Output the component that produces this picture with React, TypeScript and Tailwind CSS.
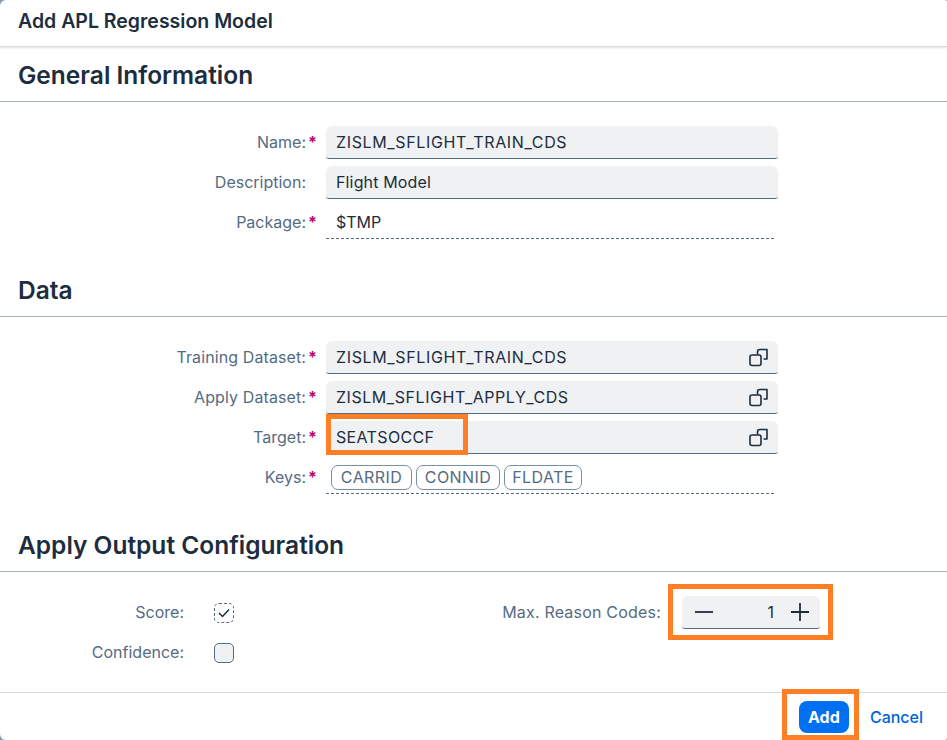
const labelColor = "text-[#556b82]";

function Label({ text, required, className }: { text: string; required?: boolean; className?: string }) {
  return (
    <div className={`flex items-center justify-end pb-[2px] pr-[10px] ${labelColor}`}>
      <span className={`mr-[-1px] ${className ?? ""}`}>{text}</span>
      <span className="w-[11px] pl-[3px] text-center font-bold text-[#c0006d]">{required ? "*" : ""}</span>
    </div>
  );
}

function ValueHelpIcon() {
  return (
    <svg width="20" height="19" viewBox="0 0 20 19" fill="none" stroke="#1d2d3e" strokeWidth="1.6">
      <rect x="1" y="7" width="11" height="10.5" rx="2" />
      <path d="M8.5 6.5V4a2.5 2.5 0 0 1 2.5-2.5h7v9.500h-3.500" strokeLinejoin="round" />
    </svg>
  );
}

function Input({ value, help, className }: { value: string; help?: boolean; className?: string }) {
  return (
    <div className="flex h-[33px] items-center justify-between rounded-t-[6px] rounded-b-[3px] border-b border-[#556b82] bg-[#eff1f2] pl-[10px] pr-[9px]">
      <span className={className}>{value}</span>
      {help && <ValueHelpIcon />}
    </div>
  );
}

function ReadOnly({ children }: { children: React.ReactNode }) {
  return (
    <div className="mr-[4px] flex h-[33px] items-center gap-[4px] border-b border-dashed border-[#556b82] pl-[10px]">
      {children}
    </div>
  );
}

function Token({ text, className }: { text: string; className: string }) {
  return (
    <span className={`flex h-[25px] items-center rounded-[7px] border border-[#788fa6] tracking-[0.4px] text-[#556b82] ${className}`}>
      {text}
    </span>
  );
}

function Section({ title, className }: { title: string; className: string }) {
  return (
    <h2 className={`flex items-end border-b border-[#a8b2bd] pb-[10px] pl-[18px] text-[24.5px] leading-[32px] font-semibold text-[#1d2d3e] ${className}`}>
      {title}
    </h2>
  );
}

function Highlight({ className }: { className: string }) {
  return <div className={`pointer-events-none absolute border-[5px] border-[#ff7f27] ${className}`} />;
}

export default function App() {
  return (
    <div className="h-[740px] w-[947px] bg-[#8b9bab]">
      <div className="relative h-[740px] w-[947px] overflow-hidden rounded-l-[6px] rounded-r-[2px] bg-white font-['Inter','Open_Sans',sans-serif] text-[16px] text-[#1d2d3e]">
        <header className="flex h-[47px] items-center border-b border-[#d9d9d9] pb-[3px] pl-[18px] text-[19.5px] font-semibold shadow-[0_1px_2px_rgba(0,0,0,0.12)]">
          Add APL Regression Model
        </header>

        <div>
          <Section title="General Information" className="h-[55px]" />
          <div className="mt-[24px] grid grid-cols-[326px_452px] gap-y-[7px]">
            <Label text="Name:" required />
            <Input value="ZISLM_SFLIGHT_TRAIN_CDS" className="tracking-[0.65px]" />
            <Label text="Description:" />
            <Input value="Flight Model" className="tracking-[0.15px]" />
            <Label text="Package:" required />
            <ReadOnly>$TMP</ReadOnly>
          </div>
        </div>

        <div className="mt-[32px]">
          <Section title="Data" className="h-[46px]" />
          <div className="mt-[24px] grid grid-cols-[326px_452px] gap-y-[7px]">
            <Label text="Training Dataset:" required className="tracking-[0.1px]" />
            <Input value="ZISLM_SFLIGHT_TRAIN_CDS" help className="tracking-[0.65px]" />
            <Label text="Apply Dataset:" required className="tracking-[0.1px]" />
            <Input value="ZISLM_SFLIGHT_APPLY_CDS" help className="tracking-[0.55px]" />
            <Label text="Target:" required />
            <Input value="SEATSOCCF" help className="tracking-[0.35px]" />
            <Label text="Keys:" required />
            <ReadOnly>
              <div className="-ml-[5px] flex gap-[4px]">
                <Token text="CARRID" className="w-[81px] justify-center" />
                <Token text="CONNID" className="w-[84px] justify-center" />
                <Token text="FLDATE" className="w-[78px] justify-center" />
              </div>
            </ReadOnly>
          </div>
        </div>

        <div className="mt-[32px]">
          <Section title="Apply Output Configuration" className="h-[46px]" />
          <div className="mt-[24px] flex">
            <div className="grid w-[234px] grid-cols-[184px_50px] grid-rows-[33px_33px] gap-y-[7px]">
              <div className={`flex items-center justify-end pb-[2px] ${labelColor}`}>Score:</div>
              <div className="flex items-center justify-end">
                <span className="flex h-[20px] w-[20px] items-center justify-center rounded-[5px] border border-dashed border-[#556b82]">
                  <svg width="12" height="10" viewBox="0 0 12 10" fill="none" stroke="#1d2d3e" strokeWidth="1.500">
                    <path d="M1 5l3.500 3.500L11 1.500" />
                  </svg>
                </span>
              </div>
              <div className={`flex items-center justify-end pb-[2px] ${labelColor}`}>Confidence:</div>
              <div className="flex items-center justify-end">
                <span className="h-[20px] w-[20px] rounded-[5px] border border-[#556b82] bg-[#eff1f2]" />
              </div>
            </div>
            <div className={`flex h-[33px] w-[427px] items-center justify-end pb-[2px] tracking-[0.2px] ${labelColor}`}>
              Max. Reason Codes:
            </div>
            <div className="ml-[21px] flex h-[33px] w-[138px] items-center rounded-t-[6px] rounded-b-[3px] border-b border-[#556b82] bg-[#eff1f2] pl-[13px] pr-[11px]">
              <svg width="18" height="18" viewBox="0 0 18 18" stroke="#1d2d3e" strokeWidth="1.800">
                <path d="M0 9h18" />
              </svg>
              <span className="ml-auto mr-[17px]">1</span>
              <svg width="18" height="18" viewBox="0 0 18 18" stroke="#1d2d3e" strokeWidth="1.800">
                <path d="M0 9h18M9 0v18" />
              </svg>
            </div>
          </div>
        </div>

        <footer className="absolute inset-x-0 bottom-0 flex h-[48px] items-center justify-end border-t border-[#d9d9d9] pr-[16px]">
          <button className="flex h-[32px] w-[50px] items-center justify-center rounded-[8px] bg-[#0070f2] font-bold text-white">
            Add
          </button>
          <button className="ml-[13px] flex h-[32px] items-center px-[8px] font-medium text-[#0064d9]">Cancel</button>
        </footer>

        <Highlight className="left-[326px] top-[414px] h-[41px] w-[142px]" />
        <Highlight className="left-[668px] top-[584px] h-[56px] w-[165px]" />
        <Highlight className="left-[782px] top-[689px] h-[51px] w-[77px]" />
      </div>
    </div>
  );
}
